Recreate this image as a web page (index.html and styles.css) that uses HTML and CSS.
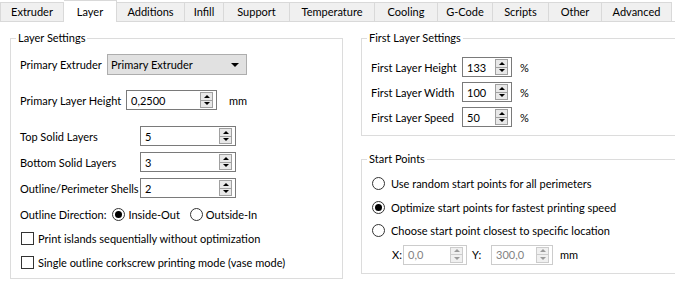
FILE: index.html
```html
<!DOCTYPE html>
<html lang="en">
<head>
  <meta charset="UTF-8">
  <title>Layer Settings</title>
  <link rel="stylesheet" href="styles.css">
</head>
<body>
  <div class="tabs">
    <div class="tab w-extruder">Extruder</div>
    <div class="tab active w-layer">Layer</div>
    <div class="tab w-additions">Additions</div>
    <div class="tab w-infill">Infill</div>
    <div class="tab w-support">Support</div>
    <div class="tab w-temp">Temperature</div>
    <div class="tab w-cooling">Cooling</div>
    <div class="tab w-gcode">G-Code</div>
    <div class="tab w-scripts">Scripts</div>
    <div class="tab w-other">Other</div>
    <div class="tab w-advanced">Advanced</div>
  </div>

  <div class="pane">
    <fieldset class="group layer-group">
      <legend>Layer Settings</legend>
      <div class="group-body">
        <div class="row row-combo">
          <span class="lbl lbl-extruder">Primary Extruder</span>
          <div class="combo">Primary Extruder<span class="combo-arrow"></span></div>
        </div>

        <div class="row row-height">
          <span class="lbl lbl-height">Primary Layer Height</span>
          <div class="spin spin-height"><span class="val">0,2500</span><span class="btns"><i class="up"></i><i class="down"></i></span></div>
          <span class="unit">mm</span>
        </div>

        <div class="row row-top">
          <span class="lbl lbl-wide">Top Solid Layers</span>
          <div class="spin spin-wide"><span class="val">5</span><span class="btns"><i class="up"></i><i class="down"></i></span></div>
        </div>
        <div class="row row-next">
          <span class="lbl lbl-wide">Bottom Solid Layers</span>
          <div class="spin spin-wide"><span class="val">3</span><span class="btns"><i class="up"></i><i class="down"></i></span></div>
        </div>
        <div class="row row-next">
          <span class="lbl lbl-wide">Outline/Perimeter Shells</span>
          <div class="spin spin-wide"><span class="val">2</span><span class="btns"><i class="up"></i><i class="down"></i></span></div>
        </div>

        <div class="row row-dir">
          <span class="lbl">Outline Direction:</span>
          <span class="radio checked dir-radio"></span><span class="dir-text">Inside-Out</span>
          <span class="radio dir-radio dir-second"></span><span class="dir-text dir-text2">Outside-In</span>
        </div>

        <div class="row row-check">
          <span class="check"></span><span class="check-text">Print islands sequentially without optimization</span>
        </div>
        <div class="row row-check">
          <span class="check"></span><span class="check-text">Single outline corkscrew printing mode (vase mode)</span>
        </div>
      </div>
    </fieldset>

    <div class="side">
      <fieldset class="group first-group">
        <legend>First Layer Settings</legend>
        <div class="group-body first-body">
          <div class="row">
            <span class="lbl lbl-first">First Layer Height</span>
            <div class="spin spin-small"><span class="val">133</span><span class="btns"><i class="up"></i><i class="down"></i></span></div>
            <span class="unit">%</span>
          </div>
          <div class="row row-first">
            <span class="lbl lbl-first">First Layer Width</span>
            <div class="spin spin-small"><span class="val">100</span><span class="btns"><i class="up"></i><i class="down"></i></span></div>
            <span class="unit">%</span>
          </div>
          <div class="row row-first">
            <span class="lbl lbl-first">First Layer Speed</span>
            <div class="spin spin-small"><span class="val">50</span><span class="btns"><i class="up"></i><i class="down"></i></span></div>
            <span class="unit">%</span>
          </div>
        </div>
      </fieldset>

      <fieldset class="group start-group">
        <legend>Start Points</legend>
        <div class="group-body start-body">
          <div class="row row-opt-first">
            <span class="radio"></span><span class="opt-text">Use random start points for all perimeters</span>
          </div>
          <div class="row row-opt">
            <span class="radio checked"></span><span class="opt-text">Optimize start points for fastest printing speed</span>
          </div>
          <div class="row row-opt row-opt-last">
            <span class="radio"></span><span class="opt-text">Choose start point closest to specific location</span>
          </div>
          <div class="row row-xy">
            <span class="xy-lbl">X:</span>
            <div class="spin spin-x disabled"><span class="val">0,0</span><span class="btns"><i class="up"></i><i class="down"></i></span></div>
            <span class="xy-lbl xy-y">Y:</span>
            <div class="spin spin-y disabled"><span class="val">300,0</span><span class="btns"><i class="up"></i><i class="down"></i></span></div>
            <span class="unit unit-xy">mm</span>
          </div>
        </div>
      </fieldset>
    </div>
  </div>
</body>
</html>
```

FILE: styles.css
```css
* {
  margin: 0;
  padding: 0;
  box-sizing: border-box;
}
body {
  font-family: Lato, "Open Sans", sans-serif;
  font-size: 11px;
  color: #000;
  background: #fff;
  width: 675px;
  height: 294px;
  overflow: hidden;
}

/* tab strip */
.tabs {
  display: flex;
  align-items: flex-end;
  height: 21px;
}
.tab {
  height: 19px;
  line-height: 18px;
  text-align: center;
  background: #f0f0f0;
  border-top: 1px solid #d9d9d9;
  border-right: 1px solid #d9d9d9;
  flex-shrink: 0;
}
.tab:first-child {
  border-left: 1px solid #d9d9d9;
}
.tab.active {
  height: 22px;
  line-height: 21px;
  margin-bottom: -1px;
  background: #fff;
  position: relative;
}
.w-extruder { width: 64px; }
.w-layer { width: 53px; }
.w-additions { width: 68px; }
.w-infill { width: 39px; }
.w-support { width: 66px; }
.w-temp { width: 85px; }
.w-cooling { width: 63px; }
.w-gcode { width: 55px; }
.w-scripts { width: 56px; }
.w-other { width: 53px; }
.w-advanced { width: 70px; }

.pane {
  display: flex;
  align-items: flex-start;
  border-top: 1px solid #d9d9d9;
  padding-left: 10px;
}

/* group boxes */
.group {
  border: 1px solid #dcdcdc;
  padding: 0;
  min-width: 0;
  flex-shrink: 0;
}
.group legend {
  margin-left: 5px;
  padding: 0 2px;
  line-height: 16px;
}
.group-body {
  padding: 8px 0 0 9px;
}
.layer-group {
  margin-top: 8px;
  width: 333px;
  height: 249px;
}
.side {
  margin-left: 18px;
  flex-shrink: 0;
}
.first-group {
  margin-top: 8px;
  width: 340px;
  height: 106px;
}
.first-body {
  padding-top: 11px;
}
.start-group {
  margin-top: 15px;
  width: 340px;
  height: 123px;
}
.start-body {
  padding: 7px 0 0 10px;
}

.row {
  display: flex;
  align-items: center;
  height: 20px;
  white-space: nowrap;
}
.row-combo { height: 21px; }
.row-height { margin-top: 15px; }
.row-top { margin-top: 16px; }
.row-next { margin-top: 6px; }
.row-dir { margin-top: 7px; height: 18px; }
.row-check { margin-top: 6px; height: 18px; }
.row-first { margin-top: 5px; }
.row-opt-first { height: 18px; }
.row-opt { margin-top: 6px; height: 18px; }
.row-opt-last { margin-top: 5px; }
.row-xy { margin-top: 5px; height: 21px; padding-left: 20px; }

.lbl-extruder { width: 87px; }
.lbl-height { width: 106px; }
.lbl-wide { width: 120px; }
.lbl-first { width: 91px; }

/* combo box */
.combo {
  width: 140px;
  height: 21px;
  line-height: 19px;
  padding-left: 3px;
  background: #e1e1e1;
  border: 1px solid #adadad;
  display: flex;
  align-items: center;
  justify-content: space-between;
}
.combo-arrow {
  width: 0;
  height: 0;
  margin-right: 7px;
  border-left: 4px solid transparent;
  border-right: 4px solid transparent;
  border-top: 4px solid #000;
}

/* spin boxes */
.spin {
  height: 20px;
  border: 1px solid #7a7a7a;
  background: #fff;
  display: flex;
  align-items: center;
  justify-content: space-between;
  padding: 0 3px 0 4px;
}
.spin-height { width: 91px; }
.spin-wide { width: 96px; }
.spin-small { width: 50px; }
.spin-x { width: 64px; }
.spin-y { width: 62px; }
.btns {
  width: 13px;
  height: 16px;
  border: 1px solid #a0a0a0;
  background: #e8e8e8;
  display: flex;
  flex-direction: column;
}
.btns i {
  flex: 1;
  display: flex;
  align-items: center;
  justify-content: center;
}
.btns i.up {
  border-bottom: 1px solid #a0a0a0;
}
.btns i.up::before,
.btns i.down::before {
  content: "";
  width: 0;
  height: 0;
  border-left: 3px solid transparent;
  border-right: 3px solid transparent;
}
.btns i.up::before { border-bottom: 3px solid #000; }
.btns i.down::before { border-top: 3px solid #000; }
.spin.disabled { border-color: #cccccc; }
.spin.disabled .val { color: #838383; }
.spin.disabled .btns { border-color: #cccccc; background: #f0f0f0; }
.spin.disabled .btns i.up { border-bottom-color: #cccccc; }
.spin.disabled .btns i.up::before { border-bottom-color: #9a9a9a; }
.spin.disabled .btns i.down::before { border-top-color: #9a9a9a; }

.unit { margin-left: 12px; }
.first-group .unit { margin-left: 8px; }
.unit-xy { margin-left: 7px; }
.xy-lbl { width: 11px; }
.xy-y { margin-left: 5px; width: 19px; }

/* radio buttons and checkboxes */
.radio {
  width: 13px;
  height: 13px;
  border: 1px solid #333;
  border-radius: 50%;
  background: #fff;
  display: flex;
  align-items: center;
  justify-content: center;
  flex-shrink: 0;
}
.radio.checked::before {
  content: "";
  width: 7px;
  height: 7px;
  border-radius: 50%;
  background: #000;
}
.dir-radio { margin-left: 6px; }
.dir-text { margin-left: 3px; }
.dir-second { margin-left: 10px; }
.opt-text { margin-left: 6px; }
.check {
  width: 13px;
  height: 13px;
  border: 1px solid #333;
  background: #fff;
  margin-left: 1px;
  flex-shrink: 0;
}
.check-text { margin-left: 4px; }
```
